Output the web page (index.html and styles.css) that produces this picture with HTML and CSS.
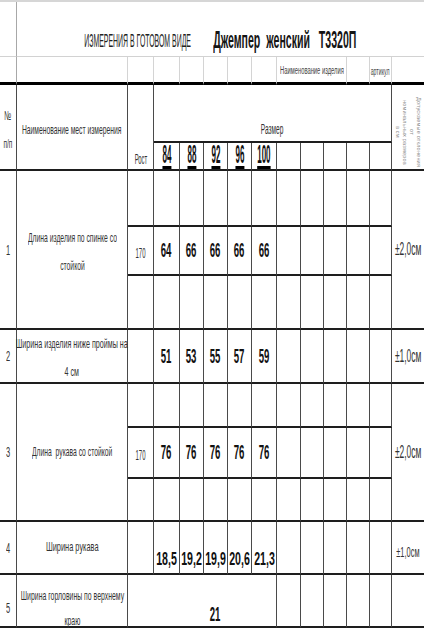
FILE: index.html
```html
<!DOCTYPE html>
<html lang="ru">
<head>
<meta charset="utf-8">
<title>Измерения в готовом виде</title>
<link rel="stylesheet" href="styles.css">
</head>
<body>
<div class="sheet">
  <!-- title row -->
  <div class="c top0"></div>
  <div class="c top0 span13 nor title">
    <div class="title-a"><span class="t t-title1">ИЗМЕРЕНИЯ В ГОТОВОМ ВИДЕ</span></div>
    <div class="title-b"><span class="t t-title2">Джемпер&nbsp; женский&nbsp;&nbsp; Т3320П</span></div>
  </div>

  <!-- product name row -->
  <div class="c top1 noline"></div>
  <div class="c top1"></div>
  <div class="c top1"></div>
  <div class="c top1"></div>
  <div class="c top1"></div>
  <div class="c top1"></div>
  <div class="c top1"></div>
  <div class="c top1"></div>
  <div class="c top1 cs3 small-cell"><span class="t t-small">Наименование изделия</span></div>
  <div class="c top1"></div>
  <div class="c top1 small-cell"><span class="t t-small2">артикул</span></div>
  <div class="c top1 nor"></div>

  <!-- header -->
  <div class="c rs2 numhead"><span class="t t-no">№<br>п/п</span></div>
  <div class="c rs2 namehead"><span class="t txt">Наименование мест измерения</span></div>
  <div class="c rs2 bottom"><span class="t t-rost">Рост</span></div>
  <div class="c cs10 bottom razmer"><span class="t t-razmer">Размер</span></div>
  <div class="c rs2 nor tolhead">
    <span class="vert">Допускаемые отклонения от<br>номинальных размеров<br>в см</span>
  </div>
  <div class="c bottom"><span class="t size">84</span></div>
  <div class="c bottom"><span class="t size">88</span></div>
  <div class="c bottom"><span class="t size">92</span></div>
  <div class="c bottom"><span class="t size">96</span></div>
  <div class="c bottom"><span class="t size">100</span></div>
  <div class="c"></div>
  <div class="c"></div>
  <div class="c"></div>
  <div class="c"></div>
  <div class="c"></div>

  <!-- 1 -->
  <div class="c rs3"><span class="t t-idx">1</span></div>
  <div class="c rs3 name1"><span class="t txt two">Длина изделия по спинке со<br>стойкой</span></div>
  <div class="c"></div>
  <div class="c"></div><div class="c"></div><div class="c"></div><div class="c"></div><div class="c"></div>
  <div class="c"></div><div class="c"></div><div class="c"></div><div class="c"></div><div class="c"></div>
  <div class="c rs3 nor"><span class="t tol">±2,0см</span></div>
  <div class="c"><span class="t t-rostval">170</span></div>
  <div class="c"><span class="t num">64</span></div>
  <div class="c"><span class="t num">66</span></div>
  <div class="c"><span class="t num">66</span></div>
  <div class="c"><span class="t num">66</span></div>
  <div class="c"><span class="t num">66</span></div>
  <div class="c"></div><div class="c"></div><div class="c"></div><div class="c"></div><div class="c"></div>
  <div class="c"></div>
  <div class="c"></div><div class="c"></div><div class="c"></div><div class="c"></div><div class="c"></div>
  <div class="c"></div><div class="c"></div><div class="c"></div><div class="c"></div><div class="c"></div>

  <!-- 2 -->
  <div class="c"><span class="t t-idx">2</span></div>
  <div class="c name2"><span class="t txt two w55">Ширина изделия ниже проймы на<br>4 см</span></div>
  <div class="c"></div>
  <div class="c"><span class="t num">51</span></div>
  <div class="c"><span class="t num">53</span></div>
  <div class="c"><span class="t num">55</span></div>
  <div class="c"><span class="t num">57</span></div>
  <div class="c"><span class="t num">59</span></div>
  <div class="c"></div><div class="c"></div><div class="c"></div><div class="c"></div><div class="c"></div>
  <div class="c nor"><span class="t tol">±1,0см</span></div>

  <!-- 3 -->
  <div class="c rs3"><span class="t t-idx">3</span></div>
  <div class="c rs3"><span class="t txt">Длина&nbsp; рукава со стойкой</span></div>
  <div class="c"></div>
  <div class="c"></div><div class="c"></div><div class="c"></div><div class="c"></div><div class="c"></div>
  <div class="c"></div><div class="c"></div><div class="c"></div><div class="c"></div><div class="c"></div>
  <div class="c rs3 nor"><span class="t tol">±2,0см</span></div>
  <div class="c"><span class="t t-rostval">170</span></div>
  <div class="c"><span class="t num">76</span></div>
  <div class="c"><span class="t num">76</span></div>
  <div class="c"><span class="t num">76</span></div>
  <div class="c"><span class="t num">76</span></div>
  <div class="c"><span class="t num">76</span></div>
  <div class="c"></div><div class="c"></div><div class="c"></div><div class="c"></div><div class="c"></div>
  <div class="c"></div>
  <div class="c"></div><div class="c"></div><div class="c"></div><div class="c"></div><div class="c"></div>
  <div class="c"></div><div class="c"></div><div class="c"></div><div class="c"></div><div class="c"></div>

  <!-- 4 -->
  <div class="c"><span class="t t-idx">4</span></div>
  <div class="c"><span class="t txt w57">Ширина рукава</span></div>
  <div class="c"></div>
  <div class="c bottom low"><span class="t num dec">18,5</span></div>
  <div class="c bottom low"><span class="t num dec">19,2</span></div>
  <div class="c bottom low"><span class="t num dec">19,9</span></div>
  <div class="c bottom low"><span class="t num dec">20,6</span></div>
  <div class="c bottom low"><span class="t num dec">21,3</span></div>
  <div class="c"></div><div class="c"></div><div class="c"></div><div class="c"></div><div class="c"></div>
  <div class="c nor tol-down"><span class="t tol tol-sm">±1,0см</span></div>

  <!-- 5 -->
  <div class="c lower"><span class="t t-idx">5</span></div>
  <div class="c lower"><span class="t txt two tight w52">Ширина горловины по верхнему<br>краю</span></div>
  <div class="c nor"></div>
  <div class="c cs5 bottom last"><span class="t num">21</span></div>
  <div class="c"></div><div class="c"></div><div class="c"></div><div class="c"></div><div class="c"></div>
  <div class="c nor"></div>
</div>
</body>
</html>
```

FILE: styles.css
```css
html, body {
  margin: 0;
  padding: 0;
  background: #ffffff;
}

body {
  font-family: "Liberation Sans", Arial, sans-serif;
  color: #2e2e2e;
}

.sheet {
  display: grid;
  width: 424px;
  grid-template-columns: 17px 111px 26px 26px 24px 24px 24px 25px 24px 23px 23px 23px 22px 32px;
  grid-template-rows: 55px 28px 58px 28px 56px 49px 54px 54px 44px 51px 43px 53px 53px;
  border-top: 2px solid #d6d6d6;
}

.c {
  box-sizing: border-box;
  min-width: 0;
  border-right: 1px solid #4a4a4a;
  border-bottom: 2px solid #1e1e1e;
  display: flex;
  align-items: center;
  justify-content: center;
}

.nor { border-right: none; }

.cs3 { grid-column: span 3; }
.cs5 { grid-column: span 5; }
.cs10 { grid-column: span 10; }
.span13 { grid-column: span 13; }
.rs2 { grid-row: span 2; }
.rs3 { grid-row: span 3; }

.bottom { align-items: flex-end; }

/* top rows */
.top0 {
  border-right-color: #a8a8a8;
  border-bottom: 1px solid #d2d2d2;
}
.top1 {
  border-right-color: #d4d4d4;
  border-bottom: 3px solid #000;
}
.top1.noline { border-right-color: #a8a8a8; }

.title {
  justify-content: flex-start;
  align-items: flex-end;
  padding-bottom: 3px;
}
.title-a {
  width: 242px;
  flex: none;
  display: flex;
  justify-content: center;
  padding-bottom: 1px;
}
.title-b {
  width: 52px;
  flex: none;
  display: flex;
  justify-content: center;
}

.small-cell { padding-top: 2px; }

/* text */
.t {
  display: inline-block;
  white-space: nowrap;
  transform: scaleX(0.54);
  transform-origin: center;
  line-height: 1.15;
  text-align: center;
}

.t-title1 {
  font-size: 18px;
  color: #222;
  transform: scaleX(0.385);
}
.t-title2 {
  font-size: 23px;
  font-weight: bold;
  color: #151515;
  transform: scaleX(0.46);
}

.t-small {
  font-size: 10px;
  color: #444;
  transform: scaleX(0.58);
}
.t-small2 {
  font-size: 10px;
  color: #444;
  transform: scaleX(0.52);
  position: relative;
  top: 1px;
}

.txt {
  font-size: 13px;
  color: #333;
  transform: scaleX(0.52);
}
.txt.w55 { transform: scaleX(0.55); }
.txt.w57 { transform: scaleX(0.57); }
.txt.w52 { transform: scaleX(0.53); }

.two { line-height: 28px; }
.two.tight { line-height: 25px; }

.numhead { padding-top: 6px; }
.namehead { padding-top: 6px; }
.t-no {
  font-size: 13px;
  line-height: 28px;
  color: #333;
  transform: scaleX(0.5);
}

.t-rost {
  font-size: 14px;
  color: #333;
  transform: scaleX(0.42);
  margin-bottom: 2px;
}

.razmer { padding-bottom: 4px; }
.t-razmer {
  font-size: 14px;
  color: #333;
  transform: scaleX(0.47);
}

.size {
  font-size: 25px;
  font-weight: bold;
  color: #111;
  line-height: 20px;
  padding-bottom: 2px;
  border-bottom: 3px solid #000;
  transform: scaleX(0.32);
}

.t-idx {
  font-size: 15px;
  color: #333;
  transform: scaleX(0.5);
}

.t-rostval {
  font-size: 15px;
  color: #333;
  transform: scaleX(0.4);
  position: relative;
  top: 2px;
}

.num {
  font-size: 20px;
  font-weight: bold;
  color: #111;
  transform: scaleX(0.48);
}
.num.dec { transform: scaleX(0.56); font-size: 19px; }

.low { padding-bottom: 3px; }
.last { padding-bottom: 0; }

.tol {
  font-size: 18px;
  color: #333;
  transform: scaleX(0.47);
}
.tol-sm {
  font-size: 14px;
  transform: scaleX(0.53);
}
.tol-down { padding-top: 10px; }

.lower { padding-top: 14px; }
.name1 { padding-top: 4px; }
.name2 { padding-top: 4px; }

.tolhead {
  align-items: flex-start;
  padding-top: 10px;
}
.vert {
  writing-mode: vertical-rl;
  font-size: 5.5px;
  line-height: 7px;
  color: #8a8a8a;
  text-align: center;
  letter-spacing: 0.2px;
}
```
